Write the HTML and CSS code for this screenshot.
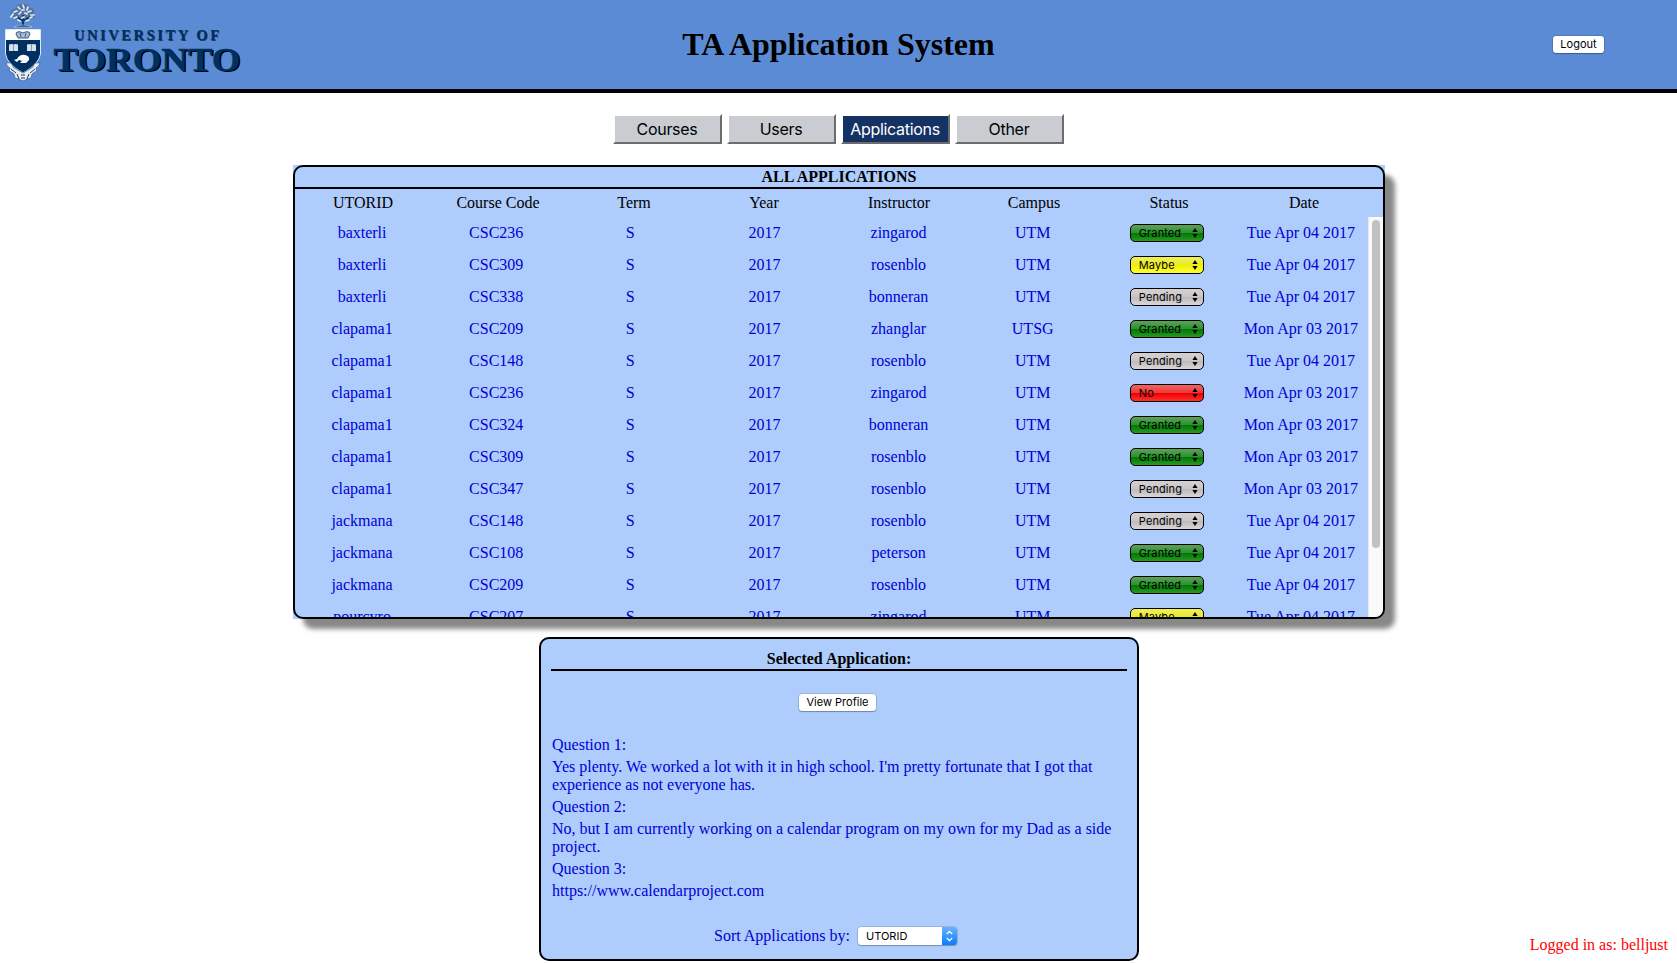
FILE: index.html
```html
<!DOCTYPE html>
<html lang="en">
<head>
<meta charset="utf-8">
<title>TA Application System</title>
<link rel="stylesheet" href="styles.css">
</head>
<body>
<header class="top">
  <svg class="logo" width="250" height="89" viewBox="0 0 250 89" role="img" aria-label="University of Toronto">
    <path d="M13 18q-4-2-2-5q-1-4 4-4q1-5 7-5q6-1 8 4q5 0 4 5q3 4-2 6q-4 2-6-1q-3 2-6 0q-4 3-7 0z" fill="#53759f"/>
    <path d="M23 27V15M23 21l-6-4M23 21l7-4" stroke="#12386c" stroke-width="2" fill="none"/>
    <path d="M11 17l2-3M14 12l3-1M18 7l2 2M23 5l1 3M28 7l-1 3M31 11l-3 1M34 15l-3 0M14 18l3-1M19 14l2-2M25 13l2 1M30 18l2-1M22 18l2-1M20 21l-2-1M26 21l3-1M22 10l2 0" stroke="#e6eef4" stroke-width="1.700" stroke-linecap="round"/>
    <path d="M14 27q9-4 18 0z" fill="#12386c" stroke="#dce7ef" stroke-width=".5"/>
    <path d="M5.500 29.500H40.500V54Q39 64 23 73Q7 64 5.500 54Z" fill="#00305f" stroke="#dce7ef"/>
    <path d="M6 30H40V40H6Z" fill="#fff"/>
    <path d="M17 32q3-1 6 1q3-2 6-1l1 2-2 4H18l-2-4z" fill="#a9bdd2" stroke="#12386c" stroke-width=".8"/>
    <path d="M20 33l1 4M26 33l-1 4" stroke="#12386c" stroke-width=".7"/>
    <path d="M9 44.500q3-1 4.500 0q1.500-1 4.500 0V51H9zM27 44.500q3-1 4.500 0q1.500-1 4.500 0V51h-9z" fill="#d5e1eb"/>
    <path d="M13.500 45v6M31.500 45v6" stroke="#5a7a9f" stroke-width=".7"/>
    <path d="M14 60l3-1q3-5 8-4q5 1 4 5l-3 3h-6l2-2-3-1-2 2z" fill="#fff"/>
    <path d="M6 63q4-1 6 1q0 3 4 5l7 4 7-4q4-2 4-5q2-2 6-1q-1 4-4 5l1 3q-3 1-5 3l-1 4q-4 1-8 3q-4-2-8-3l-1-4q-2-2-5-3l1-3q-3-1-4-5z" fill="#e6eef4" stroke="#3b608c" stroke-width=".7"/>
    <path d="M11 69l5 4M35 69l-5 4M17 74l2 5M29 74l-2 5M21 75l4 0M21 78l4 0" stroke="#12386c" stroke-width="1" fill="none"/>
    <g class="logo-text">
      <text x="74.800" y="40.500" font-size="14.500" textLength="145" fill="#000" opacity=".6">UNIVERSITY OF</text>
      <text x="74" y="39.800" font-size="14.500" textLength="145" fill="#00305f">UNIVERSITY OF</text>
      <text x="55" y="71.500" font-size="33" textLength="187" lengthAdjust="spacingAndGlyphs" fill="#000">TORONTO</text>
      <text x="53.500" y="70.500" font-size="33" textLength="187" lengthAdjust="spacingAndGlyphs" fill="#00305f" stroke="#00305f" stroke-width=".4">TORONTO</text>
    </g>
  </svg>
  <h1 class="title">TA Application System</h1>
  <div class="logout-wrap"><button class="btn logout">Logout</button></div>
</header>
<nav class="tabs">
  <button class="tab">Courses</button><button class="tab">Users</button><button class="tab active">Applications</button><button class="tab">Other</button>
</nav>
<section class="apps">
  <div class="frame">
    <h2 class="apps-title">ALL APPLICATIONS</h2>
    <div class="head"><span>UTORID</span><span>Course Code</span><span>Term</span><span>Year</span><span>Instructor</span><span>Campus</span><span>Status</span><span>Date</span></div>
    <div class="scroll">
      <div class="rows" id="rows"></div>
      <div class="track"><div class="thumb"></div></div>
    </div>
  </div>
</section>
<section class="selected">
  <h2 class="selected-title">Selected Application:</h2>
  <button class="btn profile">View Profile</button>
  <div class="answers">
    <p>Question 1:</p>
    <p>Yes plenty. We worked a lot with it in high school. I'm pretty fortunate that I got that experience as not everyone has.</p>
    <p>Question 2:</p>
    <p>No, but I am currently working on a calendar program on my own for my Dad as a side project.</p>
    <p>Question 3:</p>
    <p>https://www.calendarproject.com</p>
  </div>
  <div class="sort">
    <span>Sort Applications by:</span>
    <div class="picker"><span>UTORID</span><svg width="15" height="18" viewBox="0 0 15 18"><path d="M4.800 7L7.500 4.300L10.200 7M4.800 11L7.500 13.700L10.200 11" fill="none" stroke="#fff" stroke-width="1.300"/></svg></div>
  </div>
</section>
<div class="user">Logged in as: belljust</div>
<script src="app.js"></script>
</body>
</html>
```
FILE: styles.css
```css
* { box-sizing: border-box; }
body {
  margin: 0;
  height: 963px;
  overflow: hidden;
  position: relative;
  background: #fff;
  font: 16px/18px "Liberation Serif", "Times New Roman", serif;
}
h1, h2, p { margin: 0; }
button { padding: 0; }
.top {
  height: 93px;
  background: #5c8bd6;
  border-bottom: 4px solid #000;
  display: grid;
  grid-template-columns: 1fr auto 1fr;
  align-items: center;
}
.logo { display: block; }
.logo-text { font-family: "Liberation Serif", serif; font-weight: bold; }
.title { font-size: 32px; line-height: 36px; padding-bottom: 2px; }
.logout-wrap { display: flex; justify-content: flex-end; padding-right: 73px; }
.btn {
  height: 17px;
  border: 0;
  border-radius: 3px;
  background: #fff;
  color: #000;
  box-shadow: 0 0 0 .5px rgba(0,0,0,.25), 0 1px 1px rgba(0,0,0,.25);
  font: 11px/17px Inter, sans-serif;
  white-space: nowrap;
}
.logout { width: 51px; }
.tabs { display: flex; justify-content: center; gap: 5px; margin-top: 21px; padding-right: 1px; }
.tab {
  width: 109px;
  height: 30px;
  border: 2px solid;
  border-color: #fff #6c6c6c #6c6c6c #fff;
  background: #c9cdd2;
  color: #000;
  font: 16px/24px Inter, sans-serif;
  letter-spacing: -.3px;
}
.tab.active { background: #143264; color: #fff; }
.apps {
  width: 1092px;
  height: 454px;
  margin: 21px auto 0 293px;
  background:
    linear-gradient(#aeccfc, #aeccfc) 0 0 / 1082px 100% no-repeat,
    linear-gradient(#aeccfc, #aeccfc) 0 0 / 100% 20px no-repeat;
}
.frame {
  height: 454px;
  border: 2px solid #000;
  border-radius: 10px;
  background: #aeccfc;
  box-shadow: 10px 10px 5px #888;
  overflow: hidden;
}
.apps-title { height: 22px; border-bottom: 2px solid #000; font-size: 16px; line-height: 20px; text-align: center; }
.head {
  height: 28px;
  display: grid;
  grid-template-columns: 136px 134px 138px 122px 148px 122px 148px 122px;
  line-height: 28px;
  text-align: center;
}
.scroll { height: 400px; display: flex; }
.rows { flex: 1; height: 400px; overflow: hidden; color: #0000d8; }
.row {
  display: grid;
  grid-template-columns: repeat(8, 1fr);
  height: 32px;
  line-height: 31px;
  text-align: center;
}
.track { width: 15px; background: #fafafa; border-left: 1px solid #e8e8e8; padding: 3px 3px 0 3px; }
.thumb { width: 8px; height: 328px; border-radius: 4px; background: #c1c1c1; }
.status {
  width: 74px;
  height: 18px;
  margin: 7px auto 0;
  padding: 0 5px 0 8px;
  display: flex;
  justify-content: space-between;
  align-items: center;
  border: 1px solid #000;
  border-radius: 5px;
  color: #000;
  font: 11px/16px Inter, sans-serif;
  letter-spacing: .1px;
}
.granted { background: linear-gradient(#57a457, #2f8f2f 50%, #007c00 52%, #118811 75%, #2c962c); }
.maybe { background: linear-gradient(#f0f05a, #e8e82c 50%, #f0f000 52%, #ffff38); }
.pending { background: linear-gradient(#d4d0d4, #cac6c8 50%, #bdb9bb 52%, #dad6d9); }
.no { background: linear-gradient(#f06464, #ee3838 50%, #f00000 52%, #ff3030); }
.selected {
  width: 600px;
  height: 324px;
  margin: 18px 0 0 539px;
  padding: 11px 10px 0;
  border: 2px solid #000;
  border-radius: 10px;
  background: #aeccfc;
  color: #0000d8;
}
.selected-title { height: 21px; color: #000; font-size: 16px; line-height: 17px; text-align: center; border-bottom: 2px solid #000; }
.profile { display: block; width: 77px; margin: 23px 0 0 248px; }
.answers { display: flex; flex-direction: column; gap: 4px; padding: 0 1px; margin-top: 25px; }
.sort { display: flex; align-items: center; gap: 8px; margin: 26px 0 0 163px; }
.picker {
  width: 99px;
  height: 18px;
  margin-top: 1px;
  display: flex;
  justify-content: space-between;
  padding-left: 8px;
  border-radius: 3px;
  overflow: hidden;
  background: #fff;
  box-shadow: 0 0 0 .5px rgba(0,0,0,.25), 0 1px 1px rgba(0,0,0,.2);
  color: #000;
  font: 11px/18px Inter, sans-serif;
}
.picker svg { background: linear-gradient(#6cb3fa, #077dff); }
.user { position: absolute; right: 9px; bottom: 9px; color: #f00; }
```
FILE: app.js
```js
const data = [
  ["baxterli", "CSC236", "zingarod", "UTM", "Granted", "Tue Apr 04"],
  ["baxterli", "CSC309", "rosenblo", "UTM", "Maybe", "Tue Apr 04"],
  ["baxterli", "CSC338", "bonneran", "UTM", "Pending", "Tue Apr 04"],
  ["clapama1", "CSC209", "zhanglar", "UTSG", "Granted", "Mon Apr 03"],
  ["clapama1", "CSC148", "rosenblo", "UTM", "Pending", "Tue Apr 04"],
  ["clapama1", "CSC236", "zingarod", "UTM", "No", "Mon Apr 03"],
  ["clapama1", "CSC324", "bonneran", "UTM", "Granted", "Mon Apr 03"],
  ["clapama1", "CSC309", "rosenblo", "UTM", "Granted", "Mon Apr 03"],
  ["clapama1", "CSC347", "rosenblo", "UTM", "Pending", "Mon Apr 03"],
  ["jackmana", "CSC148", "rosenblo", "UTM", "Pending", "Tue Apr 04"],
  ["jackmana", "CSC108", "peterson", "UTM", "Granted", "Tue Apr 04"],
  ["jackmana", "CSC209", "rosenblo", "UTM", "Granted", "Tue Apr 04"],
  ["pourcyro", "CSC207", "zingarod", "UTM", "Maybe", "Tue Apr 04"]
];
const arrows = '<svg width="6" height="10" viewBox="0 0 6 10"><path d="M3 0L5.600 4H.4zM3 10L5.600 6H.4z"/></svg>';
document.getElementById("rows").innerHTML = data.map(([id, code, prof, campus, status, date]) =>
  `<div class="row"><span>${id}</span><span>${code}</span><span>S</span><span>2017</span><span>${prof}</span><span>${campus}</span><div class="status ${status.toLowerCase()}"><span>${status}</span>${arrows}</div><span>${date} 2017</span></div>`
).join("");
```
